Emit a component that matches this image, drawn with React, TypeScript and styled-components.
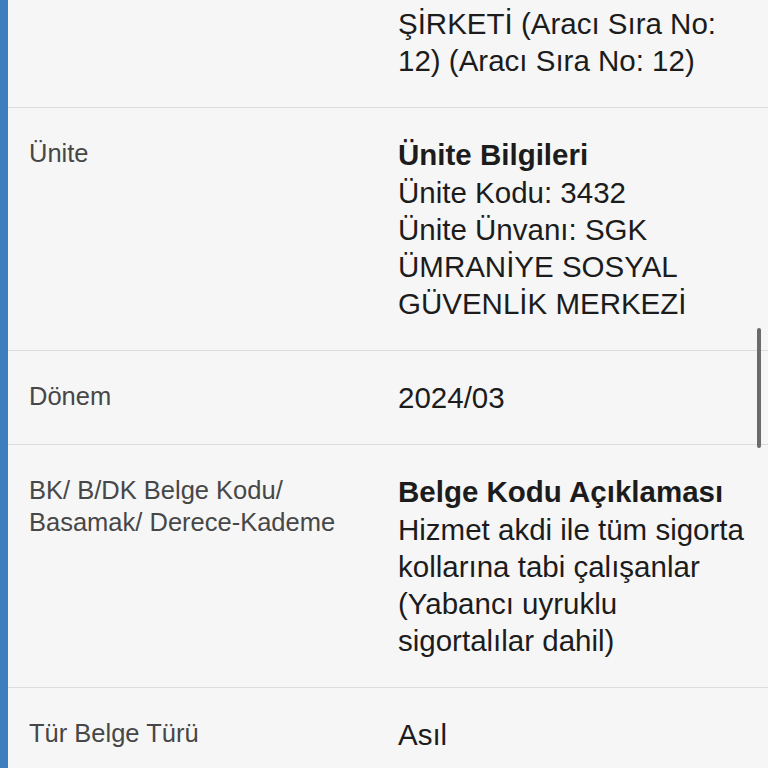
import React from "react";
import styled, { createGlobalStyle } from "styled-components";

type Detail = {
	label?: string;
	title?: string;
	lines: string[];
};

const details: Detail[] = [
	{ lines: ["ŞİRKETİ (Aracı Sıra No: 12) (Aracı Sıra No: 12)"] },
	{
		label: "Ünite",
		title: "Ünite Bilgileri",
		lines: ["Ünite Kodu: 3432", "Ünite Ünvanı: SGK ÜMRANİYE SOSYAL GÜVENLİK MERKEZİ"],
	},
	{ label: "Dönem", lines: ["2024/03"] },
	{
		label: "BK/ B/DK Belge Kodu/ Basamak/ Derece-Kademe",
		title: "Belge Kodu Açıklaması",
		lines: ["Hizmet akdi ile tüm sigorta kollarına tabi çalışanlar (Yabancı uyruklu sigortalılar dahil)"],
	},
	{ label: "Tür Belge Türü", lines: ["Asıl"] },
];

const App = () => {
	return (
		<>
			<GlobalStyle />
			<Page>
				<SideBar />
				<List>
					{details.map((d, i) => (
						<Row key={i} $clipped={i === 0}>
							<Label>{d.label}</Label>
							<Value>
								{d.title && <Title>{d.title}</Title>}
								{d.lines.map((l, j) => (
									<div key={j}>{l}</div>
								))}
							</Value>
						</Row>
					))}
				</List>
				<ScrollThumb />
			</Page>
		</>
	);
};

export default App;

const GlobalStyle = createGlobalStyle`
	html, body {
		margin: 0;
		padding: 0;
		background: #f6f6f6;
	}
	body {
		font-family: "Liberation Sans", Arial, Helvetica, sans-serif;
	}
`;

const Page = styled.div`
	position: relative;
	display: flex;
	width: 768px;
	height: 768px;
	overflow: hidden;
	background-color: #f6f6f6;
`;

const SideBar = styled.div`
	width: 8px;
	flex-shrink: 0;
	background-color: #3d7ebf;
`;

const List = styled.div`
	flex: 1;
	display: flex;
	flex-direction: column;
`;

const Row = styled.div<{ $clipped?: boolean }>`
	display: grid;
	grid-template-columns: 341px 358px;
	column-gap: 28px;
	padding: ${(p) => (p.$clipped ? "5px" : "28px")} 12px 28px 21px;
	border-bottom: 1px solid #dcdcdc;
`;

const Label = styled.div`
	font-size: 25.5px;
	line-height: 32px;
	color: #474747;
	padding-top: 1px;
`;

const Value = styled.div`
	font-size: 29.5px;
	line-height: 37px;
	color: #1c1c1c;
`;

const Title = styled.div`
	font-weight: 700;
	line-height: 38px;
`;

const ScrollThumb = styled.div`
	position: absolute;
	right: 7px;
	top: 328px;
	width: 4px;
	height: 120px;
	border-radius: 2px;
	background-color: #6b6b6b;
`;
